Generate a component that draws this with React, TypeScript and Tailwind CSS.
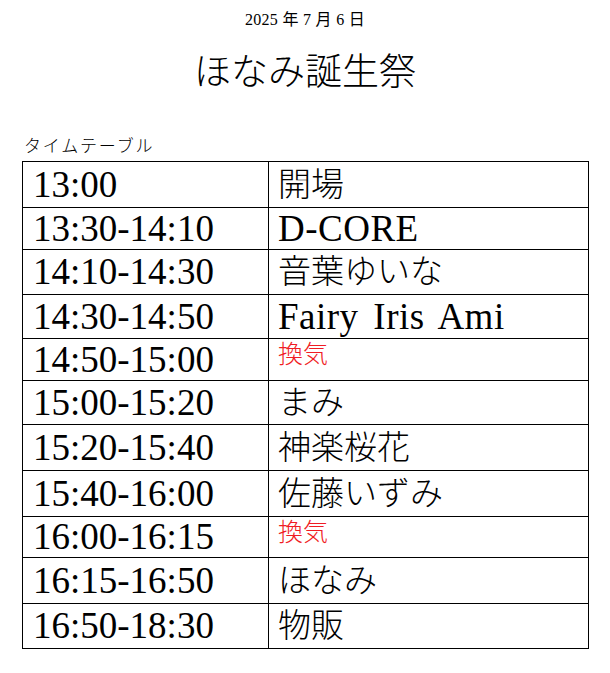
import React from "react";

type Row = {
  time: string;
  name: string;
  kind: "jp" | "en" | "break";
  h: string;
};

const rows: Row[] = [
  { time: "13:00", name: "開場", kind: "jp", h: "h-[46px]" },
  { time: "13:30-14:10", name: "D-CORE", kind: "en", h: "h-[42px]" },
  { time: "14:10-14:30", name: "音葉ゆいな", kind: "jp", h: "h-[45px]" },
  { time: "14:30-14:50", name: "Fairy Iris Ami", kind: "en", h: "h-[44px]" },
  { time: "14:50-15:00", name: "換気", kind: "break", h: "h-[42px]" },
  { time: "15:00-15:20", name: "まみ", kind: "jp", h: "h-[44px]" },
  { time: "15:20-15:40", name: "神楽桜花", kind: "jp", h: "h-[46px]" },
  { time: "15:40-16:00", name: "佐藤いずみ", kind: "jp", h: "h-[46px]" },
  { time: "16:00-16:15", name: "換気", kind: "break", h: "h-[41px]" },
  { time: "16:15-16:50", name: "ほなみ", kind: "jp", h: "h-[46px]" },
  { time: "16:50-18:30", name: "物販", kind: "jp", h: "h-[45px]" },
];

function NameCell({ row }: { row: Row }) {
  if (row.kind === "break") {
    return (
      <td className="border border-black pl-[9px] align-top pt-[1px]">
        <span className="text-[25px] leading-[30px] text-[#f01c24] font-light">
          {row.name}
        </span>
      </td>
    );
  }
  if (row.kind === "en") {
    return (
      <td className="border border-black pl-[9px] align-middle">
        <span className="text-[37px] leading-[40px] tracking-[0.5px] [word-spacing:5px]">
          {row.name}
        </span>
      </td>
    );
  }
  return (
    <td className="border border-black pl-[9px] align-middle">
      <span className="text-[33px] leading-[40px] font-light">{row.name}</span>
    </td>
  );
}

export default function App() {
  return (
    <div
      className="w-[610px] h-[673px] bg-white text-black pt-[8px]"
      style={{ fontFamily: '"Liberation Serif", "Noto Sans CJK JP", serif' }}
    >
      <p className="text-center text-[16px] leading-[24px] tracking-[0.3px]">2025 年 7 月 6 日</p>
      <h1 className="mt-[17px] text-center text-[37px] leading-[48px] font-light">
        ほなみ誕生祭
      </h1>
      <p className="mt-[40px] ml-[24px] text-[17px] leading-[20px] font-light tracking-[1.8px]">
        タイムテーブル
      </p>
      <table className="mt-[4px] ml-[22px] w-[567px] border-collapse table-fixed">
        <colgroup>
          <col className="w-[246px]" />
          <col />
        </colgroup>
        <tbody>
          {rows.map((row, i) => (
            <tr key={i} className={row.h}>
              <td className="border border-black pl-[10px] align-middle">
                <span className="text-[37px] leading-[40px]">{row.time}</span>
              </td>
              <NameCell row={row} />
            </tr>
          ))}
        </tbody>
      </table>
    </div>
  );
}
